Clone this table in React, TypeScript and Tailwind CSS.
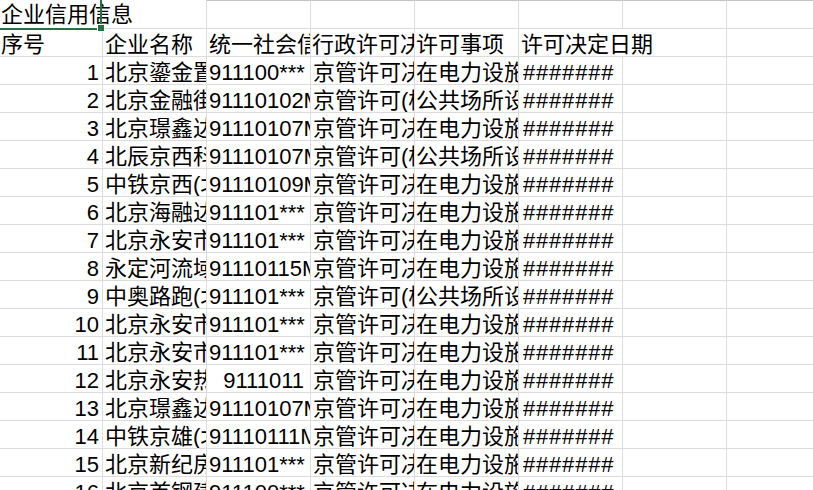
import React from "react";

type Row = [string, string, string, string, string, string];

const DEC = "京管许可决〔2023〕号";
const HE = "京管许可(核)〔2023〕号";
const DL = "在电力设施保护区内施工作业审批";
const GG = "公共场所设置户外广告审批";

const rows: Row[] = [
  ["1", "北京鎏金置业有限公司", "911100***", DEC, DL, "#######"],
  ["2", "北京金融街资本运营集团有限公司", "91110102MA01", HE, GG, "#######"],
  ["3", "北京璟鑫达商贸有限公司", "91110107MA01", DEC, DL, "#######"],
  ["4", "北辰京西科技有限公司", "91110107MA01", HE, GG, "#######"],
  ["5", "中铁京西(北京)工程有限公司", "91110109MA01", DEC, DL, "#######"],
  ["6", "北京海融达科技有限公司", "911101***", DEC, DL, "#######"],
  ["7", "北京永安市政建设投资有限公司", "911101***", DEC, DL, "#######"],
  ["8", "永定河流域投资有限公司", "91110115MA01", DEC, DL, "#######"],
  ["9", "中奥路跑(北京)体育管理有限公司", "911101***", HE, GG, "#######"],
  ["10", "北京永安市政建设投资有限公司", "911101***", DEC, DL, "#######"],
  ["11", "北京永安市政建设投资有限公司", "911101***", DEC, DL, "#######"],
  ["12", "北京永安热力有限公司", "#NUM9111011", DEC, DL, "#######"],
  ["13", "北京璟鑫达商贸有限公司", "91110107MA01", DEC, DL, "#######"],
  ["14", "中铁京雄(北京)工程有限公司", "91110111MA01", DEC, DL, "#######"],
  ["15", "北京新纪房地产开发有限公司", "911101***", DEC, DL, "#######"],
  ["16", "北京首钢建设投资有限公司", "911100***", DEC, DL, "#######"],
];

const base =
  "h-[28px] border-r border-b border-[#dcdcdc] overflow-hidden whitespace-nowrap pt-[4px] leading-[24px]";

export default function App() {
  return (
    <div className="relative w-[813px] h-[490px] overflow-hidden bg-white text-black text-[22px] font-['Liberation_Sans','Noto_Sans_CJK_SC',sans-serif]">
      <div className="grid grid-cols-[103px_repeat(7,104px)] w-[831px]">
        {/* Row 1 */}
        <div className="h-[29px] border-b border-[#dcdcdc] whitespace-nowrap overflow-visible pt-[3px] leading-[24px] pl-[1px] relative z-10">
          企业信用信息
        </div>
        <div className="h-[29px] border-r border-b border-[#dcdcdc]" />
        <div className="h-[29px] border-r border-b border-t border-[#dcdcdc] border-t-[#c4c4c4]" />
        <div className="h-[29px] border-r border-b border-t border-[#dcdcdc] border-t-[#c4c4c4]" />
        <div className="h-[29px] border-r border-b border-t border-[#dcdcdc] border-t-[#c4c4c4]" />
        <div className="h-[29px] border-r border-b border-t border-[#dcdcdc] border-t-[#c4c4c4]" />
        <div className="h-[29px] border-r border-b border-t border-[#dcdcdc] border-t-[#c4c4c4]" />
        <div className="h-[29px] border-r border-b border-t border-[#dcdcdc] border-t-[#c4c4c4]" />

        {/* Row 2 header */}
        <div className={`${base} pl-[1px]`}>序号</div>
        <div className={`${base} pl-[2px]`}>企业名称</div>
        <div className={`${base} pl-[2px]`}>统一社会信用代码</div>
        <div className={`${base} pl-[1px]`}>行政许可决定文书号</div>
        <div className={`${base} pl-[1px]`}>许可事项</div>
        <div className="h-[28px] border-b border-[#dcdcdc] whitespace-nowrap overflow-visible pt-[4px] leading-[24px] pl-[2px] relative z-10">
          许可决定日期
        </div>
        <div className={base} />
        <div className={base} />

        {rows.map((r) => (
          <React.Fragment key={r[0]}>
            <div className={`${base} text-right pr-[3px]`}>{r[0]}</div>
            <div className={`${base} pl-[2px]`}>{r[1]}</div>
            {r[2].startsWith("#NUM") ? (
              <div className={`${base} text-right pr-[6px]`}>{r[2].slice(4)}</div>
            ) : (
              <div className={`${base} pl-[2px]`}>{r[2]}</div>
            )}
            <div className={`${base} pl-[2px]`}>{r[3]}</div>
            <div className={`${base} pl-[1px]`}>{r[4]}</div>
            <div className={`${base} pl-[4px] tracking-[0.8px]`}>{r[5]}</div>
            <div className={base} />
            <div className={base} />
          </React.Fragment>
        ))}
      </div>

      {/* Selection outline on A1 */}
      <div className="absolute left-[-2px] top-[-2px] w-[104px] h-[32px] border-2 border-solid border-[#217346] z-20 pointer-events-none" />
      <div className="absolute left-[97px] top-[24px] w-[8px] h-[8px] bg-[#217346] border border-solid border-white z-30" />
    </div>
  );
}
